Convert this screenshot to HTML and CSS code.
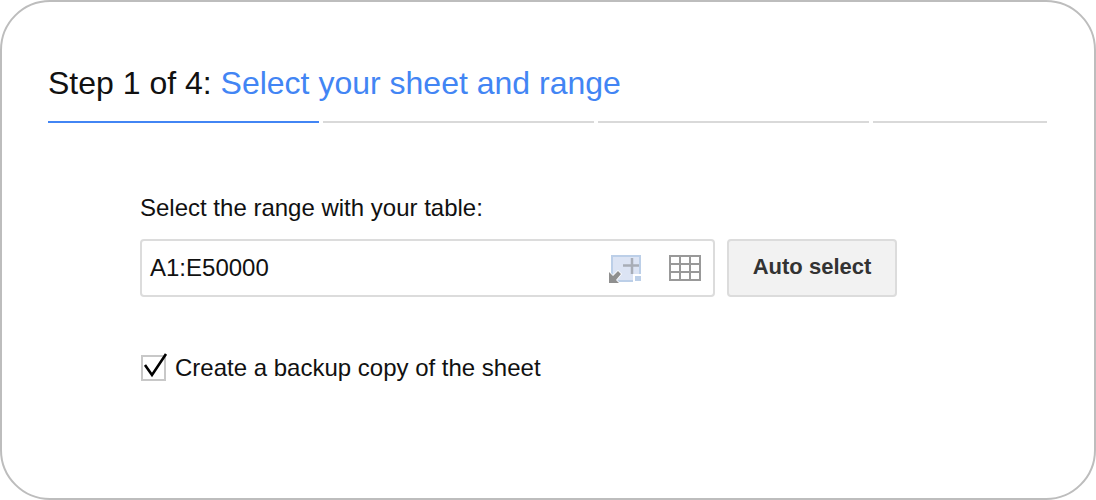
FILE: index.html
```html
<!DOCTYPE html>
<html>
<head>
  <title>Step 1 of 4</title>
  <link rel="stylesheet" href="styles.css">
</head>
<body>
  <div class="frame">
    <h1 class="title">Step 1 of 4: <span class="title-accent">Select your sheet and range</span></h1>
    <div class="steps">
      <div class="step active"></div>
      <div class="step"></div>
      <div class="step"></div>
      <div class="step last"></div>
    </div>
    <div class="content">
      <div class="range-label">Select the range with your table:</div>
      <div class="range-row">
        <div class="range-input">
          <span class="range-value">A1:E50000</span>
          <svg class="icon-select" width="36" height="32" viewBox="0 0 36 32">
            <rect x="4" y="4" width="28" height="25" fill="#dce4f4" stroke="#bccfe8" stroke-width="2"/>
            <path d="M15 13.5H31M24 6V22" stroke="#a8adb6" stroke-width="2.5" fill="none"/>
            <rect x="25" y="22" width="10" height="9" fill="#fff"/>
            <rect x="27" y="24" width="6" height="5" fill="#bccfe8"/>
            <path d="M1 20V31H11L8 28L13 22L10 19L5 24Z" fill="#8f8f8f" stroke="#fff" stroke-width="1.5" paint-order="stroke"/>
          </svg>
          <svg class="icon-grid" width="32" height="26" viewBox="0 0 32 26">
            <path d="M1 1H31V25H1ZM1 9H31M1 17H31M11 1V25M21 1V25" fill="none" stroke="#999" stroke-width="2"/>
          </svg>
        </div>
        <button class="auto-btn">Auto select</button>
      </div>
      <label class="backup">
        <span class="checkbox">
          <svg width="28" height="28" viewBox="0 0 28 28">
            <path d="M4 10L11 20L25 -1" fill="none" stroke="#000" stroke-width="2.6"/>
          </svg>
        </span>
        Create a backup copy of the sheet
      </label>
    </div>
  </div>
</body>
</html>
```

FILE: styles.css
```css
html, body {
  margin: 0;
  padding: 0;
}
body {
  width: 1096px;
  height: 500px;
  background-color: #fff;
  font-family: "Liberation Sans", Arial, sans-serif;
  overflow: hidden;
}
.frame {
  box-sizing: border-box;
  width: 1096px;
  height: 500px;
  border: 2px solid #bdbdbd;
  border-radius: 50px;
  padding: 63px 46px 0 46px;
}
.title {
  margin: 0;
  font-size: 32px;
  line-height: 36px;
  font-weight: 400;
  color: #111;
}
.title-accent {
  color: #4285f4;
}
.steps {
  display: flex;
  gap: 4px;
  margin-top: 20px;
}
.step {
  flex: 0 0 271px;
  height: 2px;
  background-color: #d9d9d9;
}
.step.active {
  background-color: #4285f4;
}
.step.last {
  flex: 0 0 174px;
}
.content {
  padding: 72px 0 0 92px;
}
.range-label {
  font-size: 24px;
  line-height: 26px;
  color: #111;
}
.range-row {
  display: flex;
  gap: 12px;
  margin-top: 18px;
}
.range-input {
  box-sizing: border-box;
  display: flex;
  align-items: center;
  width: 575px;
  height: 58px;
  padding: 0 12px 0 8px;
  background-color: #fff;
  border: 2px solid #dcdcdc;
  border-radius: 4px;
}
.range-value {
  flex-grow: 1;
  font-size: 24px;
  color: #111;
}
.icon-select {
  margin-right: 25px;
}
.auto-btn {
  box-sizing: border-box;
  width: 170px;
  height: 58px;
  padding: 0 0 2px 0;
  background-color: #f2f2f2;
  border: 2px solid #dcdcdc;
  border-radius: 4px;
  font-family: inherit;
  font-size: 22px;
  font-weight: 700;
  color: #333;
}
.backup {
  display: flex;
  align-items: center;
  margin-top: 57px;
  font-size: 24px;
  color: #111;
}
.checkbox {
  box-sizing: border-box;
  display: block;
  width: 25px;
  height: 26px;
  margin: 0 9px 0 1px;
  border: 2px solid #c8c8c8;
  position: relative;
}
.checkbox svg {
  position: absolute;
  left: -2px;
  top: -2px;
  overflow: visible;
}
```
